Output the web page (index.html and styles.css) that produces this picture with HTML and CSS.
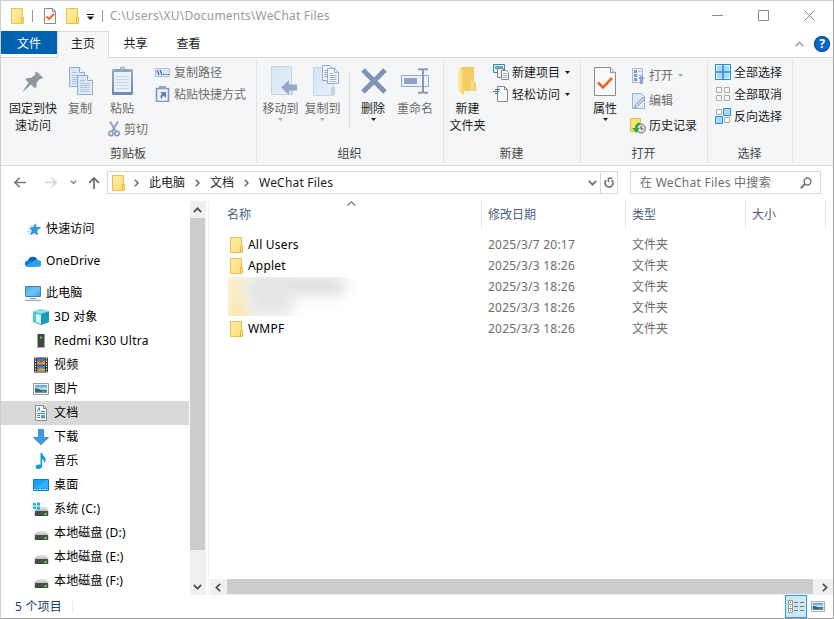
FILE: index.html
```
<!DOCTYPE html>
<html lang="zh-CN">
<head>
<meta charset="utf-8">
<title>WeChat Files</title>
<link rel="stylesheet" href="styles.css">
</head>
<body>
<svg class="defs" width="0" height="0" aria-hidden="true">
  <defs>
    <linearGradient id="gFolder" x1="0" y1="0" x2="1" y2="1"><stop offset="0" stop-color="#ffefa8"/><stop offset="1" stop-color="#fddc74"/></linearGradient>
    <linearGradient id="gPage" x1="0" y1="0" x2="1" y2="1"><stop offset="0" stop-color="#d5e4f5"/><stop offset="1" stop-color="#eaf0f8"/></linearGradient>
    <linearGradient id="gClip" x1="0" y1="0" x2="0" y2="1"><stop offset="0" stop-color="#97abcb"/><stop offset="1" stop-color="#7187ae"/></linearGradient>
    <linearGradient id="gScreen" x1="0" y1="0" x2="1" y2="1"><stop offset="0" stop-color="#45a6f2"/><stop offset=".5" stop-color="#71c5ff"/><stop offset="1" stop-color="#39a0f0"/></linearGradient>
    <linearGradient id="gDrive" x1="0" y1="0" x2="0" y2="1"><stop offset="0" stop-color="#e6e8ea"/><stop offset="1" stop-color="#b9bdc1"/></linearGradient>
    <linearGradient id="gSky" x1="0" y1="0" x2="0" y2="1"><stop offset="0" stop-color="#4c98ea"/><stop offset=".55" stop-color="#d4eefa"/><stop offset=".6" stop-color="#3f7564"/><stop offset="1" stop-color="#5f9ac0"/></linearGradient>
    <linearGradient id="gTall" x1="0" y1="0" x2="1" y2="0"><stop offset="0" stop-color="#fff0ae"/><stop offset="1" stop-color="#f5cd62"/></linearGradient>
  </defs>
  <symbol id="folder" viewBox="0 0 13 16"><path d="M.5.5h11v9h1v6H.5z" fill="url(#gFolder)" stroke="#e9c14c"/><path d="M10.500 15V9.500h2" fill="none" stroke="#e5b93c"/></symbol>
  <symbol id="props" viewBox="0 0 22 29"><path d="M.5.5h16l5 5v23H.5z" fill="#fafafa" stroke="#8b8b8b"/><path d="M16.500.5v5h5" fill="#ddd" stroke="#999"/><path d="M4 15.500l5 5L18 11" fill="none" stroke="#f4631e" stroke-width="2.600"/></symbol>
  <symbol id="page" viewBox="0 0 16 20"><path d="M.5.5h10l5 5v14H.5z" fill="url(#gPage)" stroke="#93a9cd"/><path d="M10.500.5v5h5" fill="#fff" stroke="#93a9cd"/><path d="M3 5.500h5M3 8.500h10M3 10.500h10M3 12.500h10M3 14.500h10M3 16.500h10" stroke="#b3c4de"/></symbol>
  <symbol id="down" viewBox="0 0 5 3"><path d="M0 0h5L2.500 3z" fill="currentColor"/></symbol>
  <symbol id="chev" viewBox="0 0 5 8"><path d="M.8.8L4 4 .8 7.200" fill="none" stroke="#666" stroke-width="1.500"/></symbol>
  <symbol id="picture" viewBox="0 0 16 12"><path d="M.5.5h15v11H.5z" fill="#fff" stroke="#999"/><path d="M2 2h12v8H2z" fill="url(#gSky)"/><path d="M2 5q5 .5 8 3.500H2z" fill="#2f6655"/></symbol>
  <symbol id="drive" viewBox="0 0 14 9"><path d="M2.500 0h9L14 4H0z" fill="url(#gDrive)"/><rect y="4" width="14" height="5" rx="1" fill="#4b4d4f"/><path d="M10 6h2v2h-2z" fill="#54e34c"/></symbol>
</svg>

<div class="window">
  <header class="titlebar">
    <svg class="tb-folder" width="13" height="16"><use href="#folder"/></svg>
    <i class="tb-sep first"></i>
    <svg class="tb-check" width="12" height="16" viewBox="0 0 12 16"><path d="M.5.5h8l3 3v12H.5z" fill="#fafafa" stroke="#8b8b8b"/><path d="M8.500.5v3h3" fill="none" stroke="#8b8b8b"/><path d="M2.500 8.500l2.500 2.500L10 6" fill="none" stroke="#f4631e" stroke-width="1.800"/></svg>
    <svg class="tb-folder2" width="13" height="16"><use href="#folder"/></svg>
    <svg class="tb-menu" width="7" height="6"><path d="M0 .5h7" stroke="#111"/><path d="M0 2.500h7L3.500 6z" fill="#111"/></svg>
    <i class="tb-sep"></i>
    <span class="path">C:\Users\XU\Documents\WeChat Files</span>
    <div class="controls">
      <svg width="11" height="11"><path d="M0 5.500h11" stroke="#888"/></svg>
      <svg width="11" height="11"><path d="M.5.5h10v10H.5z" fill="none" stroke="#888"/></svg>
      <svg width="11" height="11"><path d="M.5.5l10 10M10.500.5l-10 10" stroke="#888"/></svg>
    </div>
  </header>

  <nav class="tabs">
    <span class="tab file">文件</span>
    <span class="tab active">主页</span>
    <span class="tab">共享</span>
    <span class="tab">查看</span>
    <div class="tab-tools">
      <svg width="9" height="6"><path d="M.7 5.200l3.800-4 3.800 4" fill="none" stroke="#999" stroke-width="1.300"/></svg>
      <span class="help">?</span>
    </div>
  </nav>

  <section class="ribbon">
    <div class="group clipboard">
      <div class="body">
        <div class="big pin"><div class="ico">
          <svg width="21" height="21" viewBox="0 0 21 21"><path d="M13.500.5l6.500 6-1.500 1.500-1.500-.2-3.500 4 .2 4-1.700 1.400-4-3.700L.5 20.500l-.3-.8 5.300-8-3-3.200L4 7l4.500-.2 4-3.600-.3-1.500z" fill="#8d989f"/></svg></div>
          <span>固定到快<br>速访问</span></div>
        <div class="big copy off"><div class="ico copies">
          <svg width="16" height="20"><use href="#page"/></svg><svg class="front" width="16" height="20"><use href="#page"/></svg></div>
          <span>复制</span></div>
        <div class="paste-col">
          <div class="big paste off"><div class="ico">
            <svg width="21" height="29" viewBox="0 0 21 29"><rect y="3" width="21" height="26" rx="1.500" fill="url(#gClip)"/><path d="M2 6h17v20H2z" fill="#e9f0f9"/><path d="M4 10.500h13M4 13.500h13M4 16.500h13M4 19.500h13M4 22.500h13" stroke="#c8d5e8"/><path d="M5 3h3a2.500 2.500 0 0 1 5 0h3v3H5z" fill="#8fa2c1"/><circle cx="10.500" cy="2.500" r="1" fill="#eef"/></svg></div>
            <span>粘贴</span></div>
          <div class="small cut off"><svg width="12" height="16" viewBox="0 0 12 16"><path d="M2 .5l6 10M10 .5l-6 10" stroke="#8598bb" stroke-width="1.600"/><circle cx="3" cy="12.500" r="2.200" fill="none" stroke="#8598bb" stroke-width="1.500"/><circle cx="9" cy="12.500" r="2.200" fill="none" stroke="#8598bb" stroke-width="1.500"/></svg>剪切</div>
        </div>
        <div class="stack">
          <div class="small off"><svg width="15" height="9" viewBox="0 0 15 9"><path d="M.5.5h14v8H.5z" fill="#dce8f6" stroke="#b0c0da"/><path d="M2 2l2 5M5 2l2 5M8 6.500h1.500M10.300 6.500h1.500M12.500 6.500H14" stroke="#4e6794" stroke-width="1.200"/></svg>复制路径</div>
          <div class="small off"><svg width="15" height="16" viewBox="0 0 15 16"><path d="M1.500 2.500h12v13h-12z" fill="#edf3fa" stroke="#8296bb" stroke-width="1.600"/><path d="M4 0h7v3H4z" fill="#8fa2c1"/><path d="M5 6h6v6l-2-2q-2 0-2.500 3.500Q4 10 7 8z" fill="#6580ae"/></svg>粘贴快捷方式</div>
        </div>
      </div>
      <div class="caption">剪贴板</div>
    </div>

    <div class="group organize">
      <div class="body">
        <div class="big off moveto"><div class="ico">
          <svg width="27" height="29" viewBox="0 0 27 29"><path d="M.5.5h20v28H.5z" fill="url(#gPage)" stroke="#c5d4e9"/><path d="M19 20h3v9h-3z" fill="#c7d5e8"/><path d="M10 21.500L18 14v4.500h8v6h-8V29z" fill="#96a8c8"/></svg></div>
          <span>移动到</span><svg class="dd" width="5" height="3"><use href="#down"/></svg></div>
        <div class="big off copyto"><div class="ico">
          <svg width="27" height="31" viewBox="0 0 27 31"><path d="M.5 2.500h20v28H.5z" fill="url(#gPage)" stroke="#c5d4e9"/><path d="M18 22h4v8h-4z" fill="#c7d5e8"/><path d="M9.500.5h7l3 3v12h-10z" fill="#f1f6fb" stroke="#93a9cd"/><path d="M11 5.500h4M11 7.500h4M11 9.500h4M11 11.500h4" stroke="#9db2d2"/><path d="M14.500 3.500h7l4 4v11h-11z" fill="#f6f9fd" stroke="#93a9cd"/><path d="M21.500 3.500v4h4M16.500 8.500h4M16.500 10.500h7M16.500 12.500h7M16.500 14.500h7M16.500 16.500h7" fill="none" stroke="#9db2d2"/></svg></div>
          <span>复制到</span><svg class="dd" width="5" height="3"><use href="#down"/></svg></div>
        <i class="inner-sep"></i>
        <div class="big delete"><div class="ico">
          <svg width="26" height="26" viewBox="0 0 26 26"><path d="M2 2l22 22M24 2L2 24" stroke="#8193b4" stroke-width="5"/></svg></div>
          <span>删除</span><svg class="dd" width="5" height="3"><use href="#down"/></svg></div>
        <div class="big off rename"><div class="ico">
          <svg width="28" height="26" viewBox="0 0 28 26"><path d="M.5 7.500h27v11H.5z" fill="#edf3fb" stroke="#93a8cb"/><path d="M3 10h13v6H3z" fill="#91a3c4"/><path d="M17 1.200h3.500q1.500 0 1.500 2v19.600q0 2-1.500 2H17M27 1.200h-3.500q-1.500 0-1.500 2M27 24.800h-3.500q-1.500 0-1.500-2" fill="none" stroke="#8699bd" stroke-width="2"/></svg></div>
          <span>重命名</span></div>
      </div>
      <div class="caption">组织</div>
    </div>

    <div class="group create">
      <div class="body">
        <div class="big newfolder"><div class="ico">
          <svg width="20" height="28" viewBox="0 0 20 28"><path d="M3 0h13v14l2 2v8H3z" fill="#f3cc66"/><path d="M0 0l6 4v24l-6-4z" fill="url(#gTall)"/><path d="M13 14h3v10h-3z" fill="#f9dc87"/></svg></div>
          <span>新建<br>文件夹</span></div>
        <div class="stack">
          <div class="small"><svg width="16" height="16" viewBox="0 0 16 16"><path d="M.5.5h11v8H.5z" fill="#d9effc" stroke="#3f85a8"/><path d="M2 2h8v3H2z" fill="#65aacb"/><path d="M4.500 4.500h6v9h-6z" fill="#eee" stroke="#888"/><path d="M8.500 6.500h5l2 2v7h-7z" fill="#fff" stroke="#888"/><path d="M10 9.500h4M10 11.500h4M10 13.500h4" stroke="#90aecb"/></svg>新建项目<svg class="arrow" width="5" height="3"><use href="#down"/></svg></div>
          <div class="small"><svg width="16" height="16" viewBox="0 0 16 16"><path d="M4.500.5h7l3 3v12h-10z" fill="#fafafa" stroke="#888"/><path d="M11.500.5v3h3" fill="none" stroke="#888"/><path d="M2 3.500h5M0 5.500h6M2 7.500h3" stroke="#2a78b8" stroke-width="1.200"/></svg>轻松访问<svg class="arrow" width="5" height="3"><use href="#down"/></svg></div>
        </div>
      </div>
      <div class="caption">新建</div>
    </div>

    <div class="group open">
      <div class="body">
        <div class="big properties"><div class="ico"><svg width="22" height="29"><use href="#props"/></svg></div>
          <span>属性</span><svg class="dd" width="5" height="3"><use href="#down"/></svg></div>
        <div class="stack">
          <div class="small off"><svg width="16" height="16" viewBox="0 0 16 16"><path d="M2.500.5h10v14h-10z" fill="#e8eff9" stroke="#a9bad6"/><path d="M4 2h3v3H4zM4 6h3v3H4zM4 10h3v3H4z" fill="#8398be"/><path d="M8 3.500h3M8 7.500h3" stroke="#a9bad6"/><path d="M8 11l3.500-4 3.500 4h-2v5h-3v-5z" fill="#91a4c6"/></svg>打开<svg class="arrow" width="5" height="3"><use href="#down"/></svg></div>
          <div class="small off"><svg width="16" height="16" viewBox="0 0 16 16"><path d="M2.500.5h9l3 3v12h-12z" fill="url(#gPage)" stroke="#9fb2d1"/><path d="M4 15l1-3 8-8 2 2-8 8z" fill="#c3d1e7" stroke="#93a8ca"/></svg>编辑</div>
          <div class="small"><svg width="16" height="16" viewBox="0 0 16 16"><path d="M.5.5h10v13H.5z" fill="#fce37e" stroke="#e6bf3d"/><circle cx="11" cy="10.500" r="4.500" fill="#ddd" stroke="#707070"/><path d="M11 8v3h2.500" fill="none" stroke="#555"/><path d="M10 4.500Q5 5 5 10H2l4.500 5 3-5h-2q0-3 2.500-3z" fill="#26ad36"/></svg>历史记录</div>
        </div>
      </div>
      <div class="caption">打开</div>
    </div>

    <div class="group select">
      <div class="body">
        <div class="stack">
          <div class="small"><svg width="16" height="16" viewBox="0 0 16 16"><path d="M.5.5h15v15H.5z" fill="#e5f4ff" stroke="#2787d9"/><path d="M2 2h5v5H2zM9 2h5v5H9zM2 9h5v5H2zM9 9h5v5H9z" fill="#a5dafb"/><path d="M8 0v16M0 8h16" stroke="#2787d9" stroke-width="1.600"/></svg>全部选择</div>
          <div class="small"><svg width="16" height="16" viewBox="0 0 16 16"><path d="M1.500 1.500h5v5h-5zM9.500 1.500h5v5h-5zM1.500 9.500h5v5h-5zM9.500 9.500h5v5h-5z" fill="#fafafa" stroke="#aaa"/></svg>全部取消</div>
          <div class="small"><svg width="16" height="16" viewBox="0 0 16 16"><path d="M1.500 1.500h5v5h-5zM9.500 9.500h5v5h-5z" fill="#fafafa" stroke="#aaa"/><path d="M8.500.5h7v7h-7zM.5 8.500h7v7h-7z" fill="#a5dafb" stroke="#2787d9"/></svg>反向选择</div>
        </div>
      </div>
      <div class="caption">选择</div>
    </div>
  </section>

  <div class="addressbar">
    <svg class="back" width="12" height="11" viewBox="0 0 12 11"><path d="M12 5.500H1M5.700.8L1 5.500l4.700 4.700" fill="none" stroke="#777" stroke-width="1.600"/></svg>
    <svg class="fwd" width="12" height="11" viewBox="0 0 12 11"><path d="M0 5.500h11M6.300.8L11 5.500l-4.700 4.700" fill="none" stroke="#d5d5d5" stroke-width="1.600"/></svg>
    <svg class="recent" width="7" height="5" viewBox="0 0 7 5"><path d="M.8.8l2.700 2.700L6.200.8" fill="none" stroke="#888" stroke-width="1.500"/></svg>
    <svg class="up" width="12" height="12" viewBox="0 0 12 12"><path d="M6 12V1M1.200 5.900L6 1l4.800 4.900" fill="none" stroke="#6a6a6a" stroke-width="1.700"/></svg>
    <div class="crumbs">
      <svg width="13" height="16"><use href="#folder"/></svg>
      <svg class="ch first" width="5" height="8"><use href="#chev"/></svg><span>此电脑</span>
      <svg class="ch" width="5" height="8"><use href="#chev"/></svg><span>文档</span>
      <svg class="ch" width="5" height="8"><use href="#chev"/></svg><span class="current">WeChat Files</span>
      <svg class="drop" width="9" height="6" viewBox="0 0 9 6"><path d="M.8.8l3.700 3.900L8.200.8" fill="none" stroke="#707070" stroke-width="1.700"/></svg>
      <div class="refresh"><svg width="10" height="12" viewBox="0 0 10 12"><path d="M2.200 3.200A4 4 0 1 0 7.600 3" fill="none" stroke="#777" stroke-width="1.700"/><path d="M9.800 1.300H6v4" fill="none" stroke="#777" stroke-width="1.600" transform="translate(-1.500 0)"/></svg></div>
    </div>
    <div class="search"><span>在 WeChat Files 中搜索</span>
      <svg width="12" height="12" viewBox="0 0 12 12"><circle cx="7.500" cy="4.500" r="3.400" fill="none" stroke="#777" stroke-width="1.500"/><path d="M5 7L.8 11.200" stroke="#777" stroke-width="2"/></svg></div>
  </div>

  <main class="content">
    <aside class="tree">
      <div class="node root quick"><svg width="14" height="13" viewBox="0 0 16 14"><path d="M9.500.5l.9 4 5.100.2-4.200 3.200.7 5-3.800-2.200L4.300 13l1.500-4.700L3.300 5l4.200-.5z" fill="#2e9be6" stroke="#1a7cc2" stroke-width=".7"/><path d="M3 2.500h4M1 6.500h3M0 9h4M1 11.500h3" stroke="#8fcdf4"/></svg>快速访问</div>
      <div class="node root cloud"><svg width="16" height="11" viewBox="0 0 16 11"><path d="M3 4.500A5 5 0 0 1 12.500 4L11 8H2z" fill="#0a63b8"/><path d="M3 10.800A3.200 3.200 0 0 1 3 4.400q2-.6 4 1.300l4 5z" fill="#1379d3"/><path d="M3 10.800q-1.500 0-2.300-1.200L9 5q2.200-2.300 4.500-.8A3.300 3.300 0 0 1 13 10.800z" fill="#29a4e8"/></svg>OneDrive</div>
      <div class="node root pc"><svg width="16" height="15" viewBox="0 0 16 15"><path d="M.5.5h15v10H.5z" fill="url(#gScreen)" stroke="#547b94"/><path d="M5 12.500h6M0 14.300h16" stroke="#8a9aa6"/></svg>此电脑</div>
      <div class="node"><svg width="16" height="16" viewBox="0 0 16 16"><path d="M8 0l8 2.500v10.500L8 16 0 13V2.500z" fill="#30b6ce"/><path d="M0 2.500L8 0l8 2.500L8 5z" fill="#8ee0e9"/><path d="M0 2.500L8 5v11l-8-3z" fill="#4dc7d9"/><path d="M3 5l5 1v9l-5-2z" fill="#d8f4f6"/><path d="M8 5l8-2.500V13l-8 3z" fill="#169db8"/></svg>3D 对象</div>
      <div class="node phone"><svg width="16" height="16" viewBox="0 0 16 16"><path d="M4.500 1h7v13h-7z" fill="#444"/><path d="M7 3.500h2v2H7z" fill="#42df48"/><path d="M4 14.500h8" stroke="#aaa"/></svg>Redmi K30 Ultra</div>
      <div class="node"><svg width="16" height="16" viewBox="0 0 16 16"><path d="M1 .5h14v15H1z" fill="#363636"/><path d="M2.500 1v14M13.500 1v14" stroke="#eee" stroke-width="1.200" stroke-dasharray="1.300 1.300"/><path d="M4 1.500h8v6H4zM4 8.500h8v6H4z" fill="#4b79c9"/><path d="M4 6l3-2 2 1 3-1v3.500H4zM4 13l4-2 4 1v2.500H4z" fill="#d6a62c"/><circle cx="8" cy="4.500" r="1.400" fill="#ca4534"/></svg>视频</div>
      <div class="node"><svg width="16" height="12"><use href="#picture"/></svg>图片</div>
      <div class="node selected"><svg width="16" height="16" viewBox="0 0 16 16"><path d="M2.500.5h8l3 3v12h-11z" fill="#fff" stroke="#8c8c8c"/><path d="M10.500.5v3h3" fill="none" stroke="#8c8c8c"/><path d="M4 6.500l2-4 1 4M8 6.500h4M4 8.500h8M4 10.500h3M4 12.500h3" fill="none" stroke="#388ac5"/><path d="M8 10h4v3.500H8z" fill="#4f9dca"/></svg>文档</div>
      <div class="node"><svg width="16" height="16" viewBox="0 0 16 16"><path d="M5.500.5h5v8h5L8 15.700.5 8.500h5z" fill="#3c9ae8" stroke="#2b7fc8" stroke-width=".8"/></svg>下载</div>
      <div class="node"><svg width="16" height="16" viewBox="0 0 16 16"><path d="M7.500 0h1.700q.3 2.500 2.500 4.200Q14 6.500 11.300 10q.3-3-2.100-4v7q-.3 2.500-3.700 3Q2.300 16 2.500 13.500q.7-2.500 5-2z" fill="#109bea"/></svg>音乐</div>
      <div class="node"><svg width="16" height="12" viewBox="0 0 16 12"><path d="M.5.5h15v11H.5z" fill="#19a0fb" stroke="#1579bd"/><path d="M1 9L14 1h1v8z" fill="#32affd"/><path d="M1 10.500h14" stroke="#d9efff" stroke-dasharray="2 1 1 1"/></svg>桌面</div>
      <div class="node"><svg width="16" height="14" viewBox="0 0 16 14"><use href="#drive" x="1.500" y="5" width="14" height="9"/><path d="M0 1h3v2.500H0zM4 .5h3v3H4zM0 4.500h3V7H0zM4 4.500h3v3H4z" fill="#16b2f0"/></svg>系统 (C:)</div>
      <div class="node drv"><svg width="16" height="9" viewBox="0 0 16 9"><use href="#drive" x="1.500" width="14" height="9"/></svg>本地磁盘 (D:)</div>
      <div class="node drv"><svg width="16" height="9" viewBox="0 0 16 9"><use href="#drive" x="1.500" width="14" height="9"/></svg>本地磁盘 (E:)</div>
      <div class="node drv"><svg width="16" height="9" viewBox="0 0 16 9"><use href="#drive" x="1.500" width="14" height="9"/></svg>本地磁盘 (F:)</div>
    </aside>
    <div class="vscroll">
      <svg width="9" height="6" viewBox="0 0 9 6"><path d="M.8 5.200l3.700-3.900 3.700 3.900" fill="none" stroke="#505050" stroke-width="1.700"/></svg>
      <div class="thumb"></div>
      <svg width="9" height="6" viewBox="0 0 9 6"><path d="M.8.8l3.700 3.900L8.200.8" fill="none" stroke="#505050" stroke-width="1.700"/></svg>
    </div>
    <section class="files">
      <div class="head row">
        <span class="name">名称<svg class="sort" width="9" height="5" viewBox="0 0 9 5"><path d="M.6 4.500l3.900-3.700 3.900 3.700" fill="none" stroke="#777" stroke-width="1.200"/></svg></span>
        <span class="date">修改日期</span><span class="type">类型</span><span class="size">大小</span>
      </div>
      <div class="list">
        <div class="row"><span class="name"><svg width="13" height="16"><use href="#folder"/></svg>All Users</span><span class="date">2025/3/7 20:17</span><span class="type">文件夹</span></div>
        <div class="row"><span class="name"><svg width="13" height="16"><use href="#folder"/></svg>Applet</span><span class="date">2025/3/3 18:26</span><span class="type">文件夹</span></div>
        <div class="row"><span class="name"></span><span class="date">2025/3/3 18:26</span><span class="type">文件夹</span></div>
        <div class="row"><span class="name"></span><span class="date">2025/3/3 18:26</span><span class="type">文件夹</span></div>
        <div class="row"><span class="name"><svg width="13" height="16"><use href="#folder"/></svg>WMPF</span><span class="date">2025/3/3 18:26</span><span class="type">文件夹</span></div>
        <div class="smudge"><i class="s1"></i><i class="s2"></i><i class="s3"></i><i class="s4"></i></div>
      </div>
      <div class="hscroll">
        <svg width="6" height="9" viewBox="0 0 6 9"><path d="M5.200.8L1.300 4.500l3.900 3.700" fill="none" stroke="#505050" stroke-width="1.700"/></svg>
        <div class="thumb"></div>
        <svg width="6" height="9" viewBox="0 0 6 9"><path d="M.8.8l3.900 3.700L.8 8.200" fill="none" stroke="#505050" stroke-width="1.700"/></svg>
      </div>
    </section>
  </main>

  <footer class="status">
    <span>5 个项目</span><i></i>
    <div class="view on"><svg width="16" height="13" viewBox="0 0 16 13"><path d="M.5.500h4v12h-4zM.5 4.500h4M.5 8.500h4" fill="#fff" stroke="#999"/><path d="M2 2h1v1H2z" fill="#287"/><path d="M2 6h1v1H2z" fill="#28c"/><path d="M2 10h1v1H2z" fill="#c22"/><path d="M6 2.500h4M12 2.500h4M6 6.500h4M12 6.500h4M6 10.500h4M12 10.500h4" stroke="#777"/></svg></div>
    <div class="view"><svg width="14" height="11"><use href="#picture"/></svg></div>
  </footer>
</div>
</body>
</html>
```
FILE: styles.css
```
* { box-sizing: border-box; }
body {
  margin: 0;
  font: 12px/17px "Noto Sans", "Noto Sans CJK SC", sans-serif;
  color: #1c1c1c;
  background: #fff;
}
svg { display: block; flex: none; }
.defs { position: absolute; }
.window {
  width: 834px;
  height: 619px;
  display: flex;
  flex-direction: column;
  border: 1px solid #a3a3a3;
  border-left-color: #cfcfcf;
  border-top-color: #cfcfcf;
  overflow: hidden;
  white-space: nowrap;
}

/* title bar */
.titlebar { height: 30px; display: flex; align-items: center; padding-left: 10px; padding-bottom: 1px; }
.tb-sep { width: 1px; height: 12px; background: #999; margin: 0 7px 0 8px; }
.tb-sep.first { margin: 0 11px 0 8px; }
.tb-folder2 { margin: 0 8px 0 10px; }
.tb-menu { margin-top: 2px; }
.path { color: #999; letter-spacing: .2px; }
.controls { margin-left: auto; display: flex; gap: 35px; padding-right: 18px; }

/* tabs */
.tabs { height: 26px; display: flex; }
.tab { width: 53px; text-align: center; line-height: 25px; }
.tab.file { width: 56px; height: 23px; background: #0063b1; color: #fff; }
.tab.active { width: 52px; background: #f5f6f7; border: 1px solid #dadbdc; border-bottom: 0; height: 27px; line-height: 23px; z-index: 1; }
.tab-tools { margin-left: auto; display: flex; align-items: center; gap: 10px; padding-right: 3px; }
.help { width: 16px; height: 16px; border-radius: 50%; background: #0a66c8; outline: 1px solid #07529c; outline-offset: -1px; color: #fff; text-align: center; font-weight: 700; font-size: 12px; line-height: 16px; }

/* ribbon */
.ribbon { height: 109px; background: #f5f6f7; border-top: 1px solid #dadbdc; border-bottom: 1px solid #dadbdc; display: flex; padding: 2px 0; }
.group { display: flex; flex-direction: column; border-right: 1px solid #e2e3e4; }
.body { display: flex; height: 84px; }
.caption { text-align: center; color: #444; line-height: 18px; margin-top: 1px; padding-right: 1px; }
.clipboard { width: 256px; }
.organize { width: 187px; }
.create { width: 137px; }
.open { width: 127px; }
.select { width: 85px; }
.big { display: flex; flex-direction: column; align-items: center; text-align: center; }
.ico { height: 40px; display: flex; align-items: center; justify-content: center; padding-top: 2px; }
.off { color: #6d6d6d; }
.dd { margin-top: 1px; }
.off .dd, .off .arrow { color: #aaa; }
.pin { width: 64px; }
.copy { width: 30px; }
.copies { width: 24px; justify-content: flex-start; align-items: flex-start; padding-top: 7px; margin-left: 2px; }
.copies .front { margin: 8px 0 0 -8px; }
.paste-col { width: 60px; padding-left: 9px; }
.paste { width: 36px; }
.clipboard .paste .ico { padding-top: 1px; }
.paste-col .cut { margin: 1px 0 0 4px; }
.paste-col .cut svg { margin-right: 4px; }
.small { display: flex; align-items: center; height: 22px; }
.small > svg:first-child { margin-right: 4px; }
.arrow { margin-left: 5px; }
.stack { padding-top: 1px; }
.moveto { width: 47px; }
.copyto { width: 37px; }
.moveto .ico, .copyto .ico { padding-left: 7px; padding-top: 0; }
.inner-sep { width: 1px; height: 55px; margin: 13px 0 0 8px; background: #dcdddf; }
.delete { width: 46px; }
.delete .ico { padding-left: 1px; }
.rename { width: 38px; margin-right: 1px; }
.newfolder { width: 47px; }
.create .stack { padding-left: 2px; }
.create .small > svg:first-child { margin-right: 3px; }
.properties { width: 48px; }
.open .stack { padding-top: 3px; padding-left: 1px; }
.open .small { height: 25px; }
.open .small > svg:first-child { margin-right: 3px; }
.select .stack { padding-left: 7px; }
.select .small > svg:first-child { margin-right: 3px; }

/* address row */
.addressbar { height: 35px; display: flex; align-items: center; padding-left: 13px; padding-bottom: 2px; }
.fwd { margin-left: 19px; }
.recent { margin-left: 13px; }
.up { margin-left: 11px; }
.crumbs { width: 511px; height: 23px; margin-left: 7px; border: 1px solid #d9d9d9; display: flex; align-items: center; padding-left: 4px; }
.ch { margin: 0 10px; }
.ch.first { margin-left: 9px; }
.current { letter-spacing: .2px; }
.drop { margin-left: auto; margin-right: 3px; }
.refresh { width: 17px; height: 21px; border-left: 1px solid #d9d9d9; display: flex; align-items: center; justify-content: center; }
.search { width: 191px; height: 23px; margin-left: 12px; border: 1px solid #d9d9d9; display: flex; align-items: center; justify-content: space-between; padding: 0 8px 0 9px; color: #6d6d6d; letter-spacing: .27px; }

/* content */
.content { height: 394px; display: flex; color: #000; }
.tree { width: 188px; padding-top: 16px; }
.node { height: 24px; display: flex; align-items: center; padding: 0 0 2px 32px; letter-spacing: .15px; }
.node > svg { margin: 2px 5px 0 0; }
.root { padding-left: 24px; }
.quick > svg { margin-left: 2px; }
.quick, .cloud { margin-bottom: 8px; }
.phone { letter-spacing: .25px; }
.selected { background: #d9d9d9; }
.drv > svg { margin-top: 6px; }
.vscroll { width: 16px; margin-left: 1px; background: #f0f0f0; display: flex; flex-direction: column; align-items: center; padding: 6px 1px 5px 0; }
.vscroll .thumb { width: 15px; height: 332px; margin: 5px 0 auto; background: #cdcdcd; }
.files { width: 625px; margin-left: 2px; border-left: 1px solid #f1f1f1; display: flex; flex-direction: column; }
.row { display: flex; height: 21px; align-items: center; }
.row > span { display: flex; align-items: center; height: 100%; }
.row .name { width: 272px; padding-left: 21px; letter-spacing: .2px; }
.row .name > svg { margin-right: 5px; }
.row .date { width: 144px; padding-left: 7px; color: #6d6d6d; letter-spacing: .22px; }
.row .type { width: 120px; padding-left: 7px; color: #6d6d6d; }
.row .size { width: 80px; padding-left: 6px; }
.head { height: 27px; }
.head.row > span { border-right: 1px solid #e5e5e5; color: #4c607a; letter-spacing: 0; }
.head.row .name { position: relative; width: 273px; padding-left: 18px; }
.head.row .name .sort { position: absolute; left: 138px; top: 0; margin: 0; }
.head.row .date, .head.row .type { padding-left: 6px; }
.list { position: relative; margin-top: 6px; }
.smudge { position: absolute; left: 19px; top: 43px; width: 130px; height: 39px; overflow: hidden; background: #fff; }
.smudge i { position: absolute; filter: blur(7px); }
.s1 { left: -6px; top: -4px; width: 26px; height: 50px; background: #faedc4; }
.s2 { left: 22px; top: 0; width: 94px; height: 18px; background: #dddddd; }
.s3 { left: 20px; top: 4px; width: 44px; height: 36px; background: #e6e6e8; }
.s4 { left: 4px; top: 30px; width: 14px; height: 14px; background: #f7e2a0; }
.hscroll { height: 16px; width: 624px; margin: auto 0 0 1px; background: #f0f0f0; display: flex; align-items: center; padding: 0 5px; }
.hscroll .thumb { width: 586px; height: 15px; margin: 0 9px 1px 6px; background: #cdcdcd; }

/* status bar */
.status { height: 23px; display: flex; align-items: center; padding-left: 14px; color: #23405f; letter-spacing: .2px; }
.status i { width: 1px; height: 11px; background: #eee; margin-left: 10px; }
.view { width: 22px; height: 23px; display: flex; align-items: center; justify-content: center; margin-right: 4px; }
.view.on { margin-left: auto; margin-right: 0; background: #cce8f7; border: 1px solid #26a0da; }
```
